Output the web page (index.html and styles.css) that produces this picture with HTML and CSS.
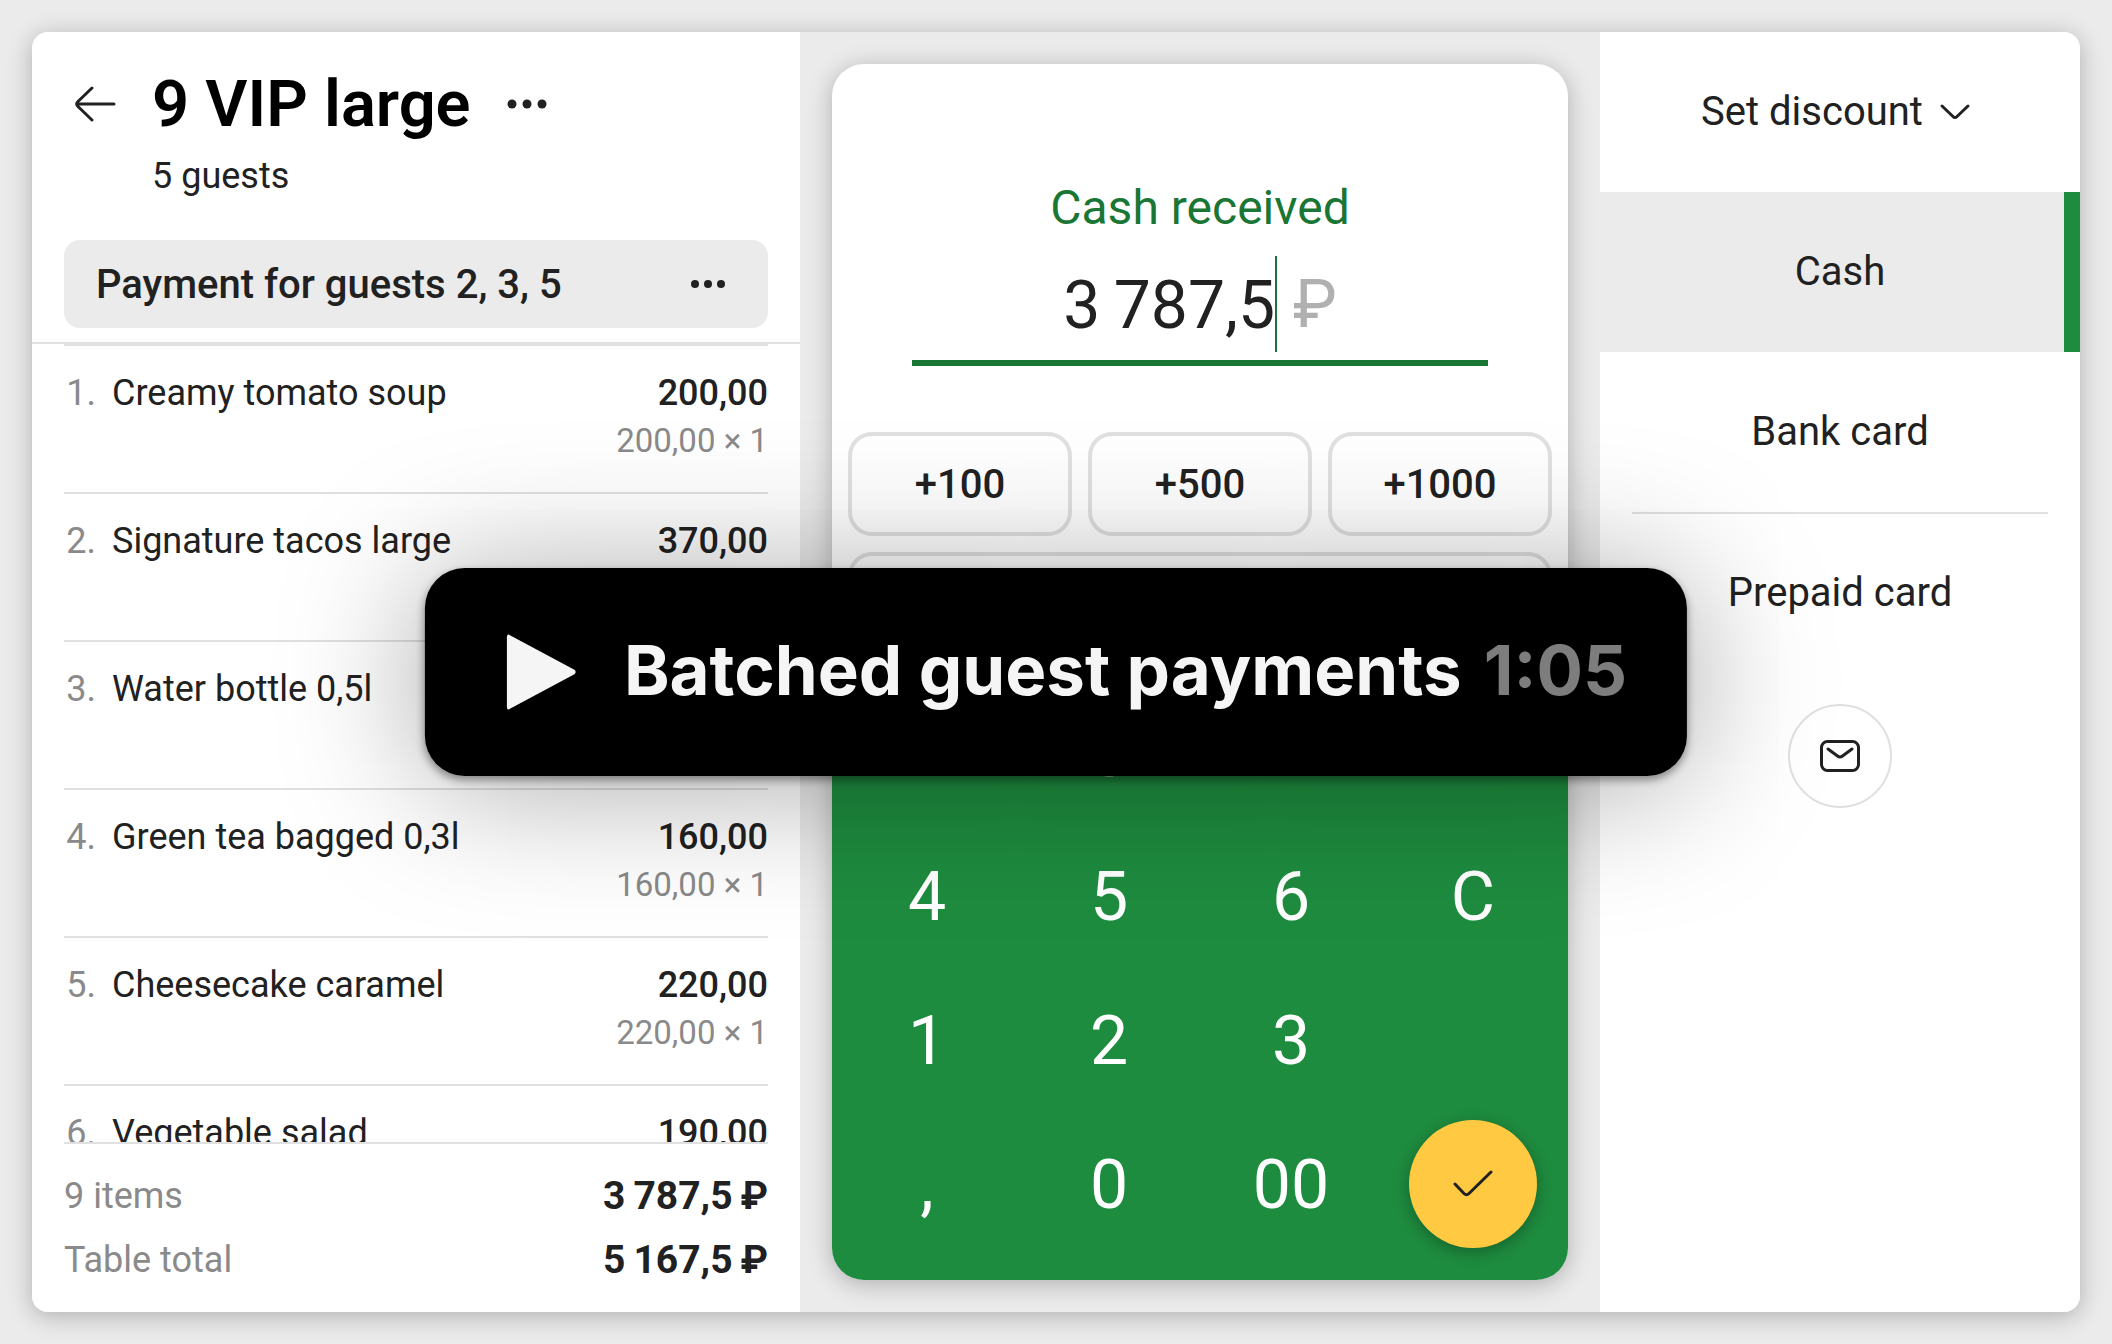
FILE: index.html
```html
<!DOCTYPE html>
<html lang="en">
<head>
<meta charset="utf-8">
<meta name="viewport" content="width=device-width, initial-scale=1">
<title>9 VIP large</title>
<link rel="stylesheet" href="styles.css">
</head>
<body>
<div class="app">
  <section class="order">
    <header class="order-head">
      <button class="icon-button" type="button" aria-label="Back">
        <svg width="48" height="48" viewBox="0 0 48 48" fill="none" stroke="currentColor" stroke-width="3" stroke-linecap="round" stroke-linejoin="round"><path d="M42 24H5M20 8 6 21.500Q3.500 24 6 26.500L20 40"/></svg>
      </button>
      <h1 class="title">9 VIP large</h1>
      <button class="icon-button" type="button" aria-label="Table menu">
        <svg width="48" height="48" viewBox="0 0 48 48" fill="currentColor"><circle cx="9" cy="24" r="4.500"/><circle cx="24" cy="24" r="4.500"/><circle cx="39" cy="24" r="4.500"/></svg>
      </button>
      <p class="guests">5 guests</p>
    </header>
    <div class="group">
      <h2 class="group-name">Payment for guests 2, 3, 5</h2>
      <button class="icon-button" type="button" aria-label="Payment menu">
        <svg width="40" height="40" viewBox="0 0 40 40" fill="currentColor"><circle cx="7" cy="20" r="4"/><circle cx="20" cy="20" r="4"/><circle cx="33" cy="20" r="4"/></svg>
      </button>
    </div>
    <ol class="items">
      <li class="item"><span class="num">1.</span><span class="name">Creamy tomato soup</span><span class="price">200,00</span><span class="qty">200,00 × 1</span></li>
      <li class="item"><span class="num">2.</span><span class="name">Signature tacos large</span><span class="price">370,00</span></li>
      <li class="item"><span class="num">3.</span><span class="name">Water bottle 0,5l</span></li>
      <li class="item"><span class="num">4.</span><span class="name">Green tea bagged 0,3l</span><span class="price">160,00</span><span class="qty">160,00 × 1</span></li>
      <li class="item"><span class="num">5.</span><span class="name">Cheesecake caramel</span><span class="price">220,00</span><span class="qty">220,00 × 1</span></li>
      <li class="item"><span class="num">6.</span><span class="name">Vegetable salad</span><span class="price">190,00</span></li>
    </ol>
    <dl class="totals">
      <div class="total"><dt>9 items</dt><dd>3&#8201;787,5&#8201;₽</dd></div>
      <div class="total"><dt>Table total</dt><dd>5&#8201;167,5&#8201;₽</dd></div>
    </dl>
  </section>

  <main class="stage">
    <div class="register">
      <div class="cash">
        <label class="cash-label" for="received">Cash received</label>
        <div class="amount">
          <input class="amount-input" id="received" type="text" inputmode="decimal" value="3&#8201;787,5" size="6">
          <span class="caret"></span>
          <span class="currency">₽</span>
        </div>
      </div>
      <div class="quick">
        <button class="quick-button" type="button">+100</button>
        <button class="quick-button" type="button">+500</button>
        <button class="quick-button" type="button">+1000</button>
        <button class="quick-button quick-wide" type="button" aria-label="Exact amount"></button>
      </div>
      <div class="keypad">
        <button class="key" type="button">7</button>
        <button class="key" type="button">8</button>
        <button class="key" type="button">9</button>
        <span></span>
        <button class="key" type="button">4</button>
        <button class="key" type="button">5</button>
        <button class="key" type="button">6</button>
        <button class="key" type="button">C</button>
        <button class="key" type="button">1</button>
        <button class="key" type="button">2</button>
        <button class="key" type="button">3</button>
        <span></span>
        <button class="key" type="button">,</button>
        <button class="key" type="button">0</button>
        <button class="key" type="button">00</button>
        <button class="confirm" type="button" aria-label="Confirm">
          <svg width="40" height="40" viewBox="0 0 40 40" fill="none" stroke="currentColor" stroke-width="3" stroke-linecap="round" stroke-linejoin="round"><path d="M2 20 11 29.500Q13.500 32 16 29.500L38 8"/></svg>
        </button>
      </div>
    </div>
  </main>

  <aside class="methods">
    <button class="method" type="button">Set discount
      <svg width="40" height="32" viewBox="0 0 40 32" fill="none" stroke="currentColor" stroke-width="3" stroke-linecap="round" stroke-linejoin="round"><path d="M3 10 14 20.500Q16 22.500 18 20.500L29 10"/></svg>
    </button>
    <button class="method method-active" type="button" aria-pressed="true">Cash</button>
    <button class="method" type="button">Bank card</button>
    <button class="method method-ruled" type="button">Prepaid card</button>
    <button class="mail" type="button" aria-label="Send receipt">
      <svg width="48" height="48" viewBox="0 0 48 48" fill="none" stroke="currentColor" stroke-width="3" stroke-linecap="round" stroke-linejoin="round"><rect x="5.500" y="9.500" width="37" height="29" rx="6"/><path d="M12 17 21.500 24Q24 26 26.500 24L36 17"/></svg>
    </button>
  </aside>
</div>

<button class="video" type="button">
  <svg class="play" width="72" height="78" viewBox="0 0 72 78"><path d="M2 4Q2 0 5.500 2.400L69.500 36.800Q72 39 69.500 41.200L5.500 75.600Q2 78 2 74Z" fill="#f5f5f5"/></svg>
  <span class="video-title">Batched guest payments</span>
  <span class="video-time">1:05</span>
</button>
</body>
</html>
```
FILE: styles.css
```css
* { box-sizing: border-box; margin: 0; padding: 0; }

body {
  font-family: Roboto, "Liberation Sans", sans-serif;
  font-size: 36px;
  line-height: 48px;
  color: #212121;
  background: #ebebeb;
}

button, input { font: inherit; color: inherit; background: none; border: 0; }
button { cursor: pointer; }
svg { display: block; flex: none; }

.app {
  display: grid;
  grid-template-columns: 48fr 50fr 30fr;
  height: calc(100vh - 64px);
  margin: 32px;
  border-radius: 16px;
  background: #ebebeb;
  box-shadow: 0 4px 24px rgba(0, 0, 0, .26);
}

/* Order */
.order {
  display: flex;
  flex-direction: column;
  min-height: 0;
  background: #fff;
  border-radius: 16px 0 0 16px;
}
.order-head {
  display: grid;
  grid-template-columns: 48px auto 1fr;
  column-gap: 32px;
  align-items: center;
  padding: 40px 40px 40px;
}
.title { font-size: 65px; line-height: 64px; font-weight: 600; color: #000; }
.guests { grid-column: 2 / -1; margin-top: 16px; }
.group {
  display: flex;
  align-items: center;
  justify-content: space-between;
  height: 88px;
  margin: 0 32px 14px;
  padding: 0 40px 0 32px;
  border-radius: 16px;
  background: #ebebeb;
}
.group-name { padding-top: 2px; font-size: 40px; font-weight: 500; }
.items {
  flex: 1;
  min-height: 0;
  overflow: hidden;
  list-style: none;
  padding: 0 32px;
  border-top: 2px solid #e0e0e0;
}
.item {
  display: grid;
  grid-template-columns: 32px 1fr auto;
  grid-template-rows: 48px 48px;
  column-gap: 16px;
  height: 148px;
  padding-top: 23px;
  border-top: 2px solid #e0e0e0;
}
.num { color: #8a8a8a; text-align: right; }
.price { font-weight: 500; }
.qty { grid-column: 2 / -1; text-align: right; font-size: 33px; color: #8a8a8a; }
.totals { margin: 0 32px; padding: 20px 0; border-top: 2px solid #e0e0e0; }
.total { display: flex; justify-content: space-between; line-height: 64px; }
.total dt { color: #8a8a8a; }
.total dd { font-size: 39px; font-weight: 700; }

/* Register */
.stage { padding: 32px; min-height: 0; }
.register {
  display: flex;
  flex-direction: column;
  height: 100%;
  overflow: hidden;
  border-radius: 32px;
  background: #fff;
  box-shadow: 0 4px 24px rgba(0, 0, 0, .26);
}
.cash { padding: 112px 80px 66px; text-align: center; }
.cash-label { display: block; font-size: 48px; line-height: 64px; color: #1a7634; }
.amount {
  display: flex;
  align-items: center;
  justify-content: center;
  height: 126px;
  padding-top: 8px;
  border-bottom: 6px solid #1a7634;
  font-size: 66px;
}
.amount-input { field-sizing: content; height: 96px; padding-top: 2px; outline: 0; }
.caret { width: 2px; height: 96px; background: #1a7634; }
.currency { margin-left: 16px; padding-top: 2px; color: #b0b0b0; }
.quick {
  display: grid;
  grid-template-columns: repeat(3, 1fr);
  gap: 16px;
  padding: 0 16px;
}
.quick-button {
  height: 104px;
  padding-top: 2px;
  border: 4px solid #e0e0e0;
  border-radius: 24px;
  font-size: 40px;
  font-weight: 500;
}
.quick-wide { grid-column: 1 / -1; }
.keypad {
  flex: 1;
  display: grid;
  grid-template-columns: repeat(4, 1fr);
  grid-template-rows: repeat(4, 144px);
  align-content: end;
  padding: 0 4px 24px;
  background: #1e8c3f;
  color: #fff;
  font-size: 68px;
}
.key { padding-top: 2px; }
.confirm {
  display: grid;
  place-items: center;
  place-self: center;
  width: 128px;
  height: 128px;
  border-radius: 50%;
  background: #ffca42;
  color: #212121;
  box-shadow: 0 4px 16px rgba(0, 0, 0, .3);
}

/* Payment methods */
.methods {
  display: flex;
  flex-direction: column;
  background: #fff;
  border-radius: 0 16px 16px 0;
}
.method {
  display: flex;
  align-items: center;
  justify-content: center;
  gap: 16px;
  height: 160px;
  font-size: 40px;
}
.method-active { background: #ebebeb linear-gradient(#1e8c3f, #1e8c3f) right / 16px 100% no-repeat; }
.method-ruled { margin: 0 32px; border-top: 2px solid #e0e0e0; }
.mail {
  display: grid;
  place-items: center;
  align-self: center;
  width: 104px;
  height: 104px;
  margin-top: 32px;
  border: 2px solid #e0e0e0;
  border-radius: 50%;
}

/* Video banner floating over the page */
.video {
  position: absolute;
  top: 50%;
  left: 50%;
  transform: translate(-50%, -50%);
  display: flex;
  align-items: center;
  height: 208px;
  padding: 0 60px 0 80px;
  border-radius: 40px;
  background: #000;
  color: #f5f5f5;
  font-family: Inter, "Liberation Sans", sans-serif;
  font-size: 69px;
  line-height: 80px;
  font-weight: 700;
  white-space: nowrap;
  box-shadow: 0 4px 8px rgba(0, 0, 0, .4), 0 8px 140px rgba(0, 0, 0, .36);
}
.video-title, .video-time { padding-bottom: 4px; }
.video-title { margin: 0 22px 0 47px; }
.video-time { color: #7d7d7d; }
```
